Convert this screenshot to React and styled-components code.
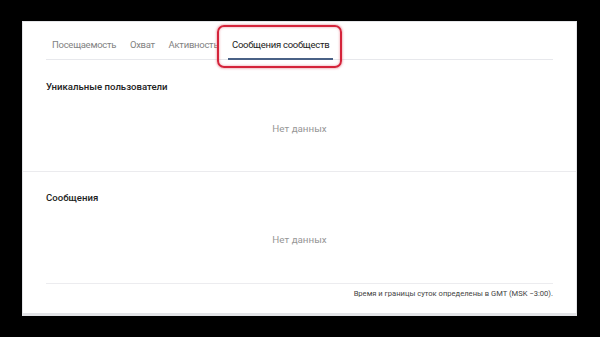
import React from "react";
import styled, { createGlobalStyle } from "styled-components";

const Global = createGlobalStyle`
  html, body { margin: 0; padding: 0; background: #000; }
  body { font-family: Roboto, "Noto Sans", "Liberation Sans", sans-serif; }
`;

const Page = styled.div`
  width: 600px;
  height: 337px;
  padding: 21px 0 0 22px;
  box-sizing: border-box;
  background: #000;
`;

const Panel = styled.div`
  width: 555px;
  box-sizing: border-box;
  background: #fff;
  border: 1px solid #e4e5e8;
  border-bottom: 3px solid #e2e3e6;
`;

const Tabs = styled.div`
  display: flex;
  margin: 0 23px;
  border-bottom: 1px solid #e7e8ec;
`;

const Tab = styled.div`
  position: relative;
  padding: 16px 4px 7px;
  margin-right: 5.7px;
  font-size: 9.5px;
  letter-spacing: -0.27px;
  line-height: 13px;
  white-space: nowrap;
  color: ${(p) => (p.$active ? "#222" : "#828282")};
  border-bottom: 2px solid ${(p) => (p.$active ? "#4a6186" : "transparent")};
  margin-bottom: -1px;
  &:first-child { padding-left: 6px; }
`;

const Highlight = styled.div`
  position: absolute;
  left: -11px;
  right: -9px;
  top: 3px;
  bottom: -10px;
  border: 2px solid #d4233a;
  border-radius: 7px;
  box-shadow: 0 0 2px 1px rgba(225, 110, 125, 0.45),
    inset 0 0 2px 1px rgba(225, 110, 125, 0.35);
  pointer-events: none;
`;

const Section = styled.div`
  padding: 0 23px;
  border-bottom: ${(p) => (p.$divided ? "1px solid #ebebee" : "none")};
`;

const Heading = styled.div`
  padding-top: ${(p) => p.$top}px;
  font-size: 9.6px;
  line-height: 14px;
  font-weight: 500;
  color: #222;
`;

const Empty = styled.div`
  padding: 28px 0 ${(p) => p.$bottom}px;
  text-align: center;
  font-size: 9.8px;
  line-height: 14px;
  color: #969696;
`;

const Footer = styled.div`
  border-top: 1px solid #ececef;
  padding: 4px 0 13px;
  text-align: right;
  font-size: 7.6px;
  line-height: 12px;
  color: #444;
`;

export default function App() {
  const tabs = ["Посещаемость", "Охват", "Активность", "Сообщения сообществ"];
  return (
    <>
      <Global />
      <Page>
        <Panel>
          <Tabs>
            {tabs.map((t, i) => (
              <Tab key={t} $active={i === 3}>
                {t}
                {i === 3 && <Highlight />}
              </Tab>
            ))}
          </Tabs>
          <Section $divided>
            <Heading $top={20}>Уникальные пользователи</Heading>
            <Empty $bottom={35}>Нет данных</Empty>
          </Section>
          <Section>
            <Heading $top={19}>Сообщения</Heading>
            <Empty $bottom={36}>Нет данных</Empty>
            <Footer>Время и границы суток определены в GMT (MSK −3:00).</Footer>
          </Section>
        </Panel>
      </Page>
    </>
  );
}
